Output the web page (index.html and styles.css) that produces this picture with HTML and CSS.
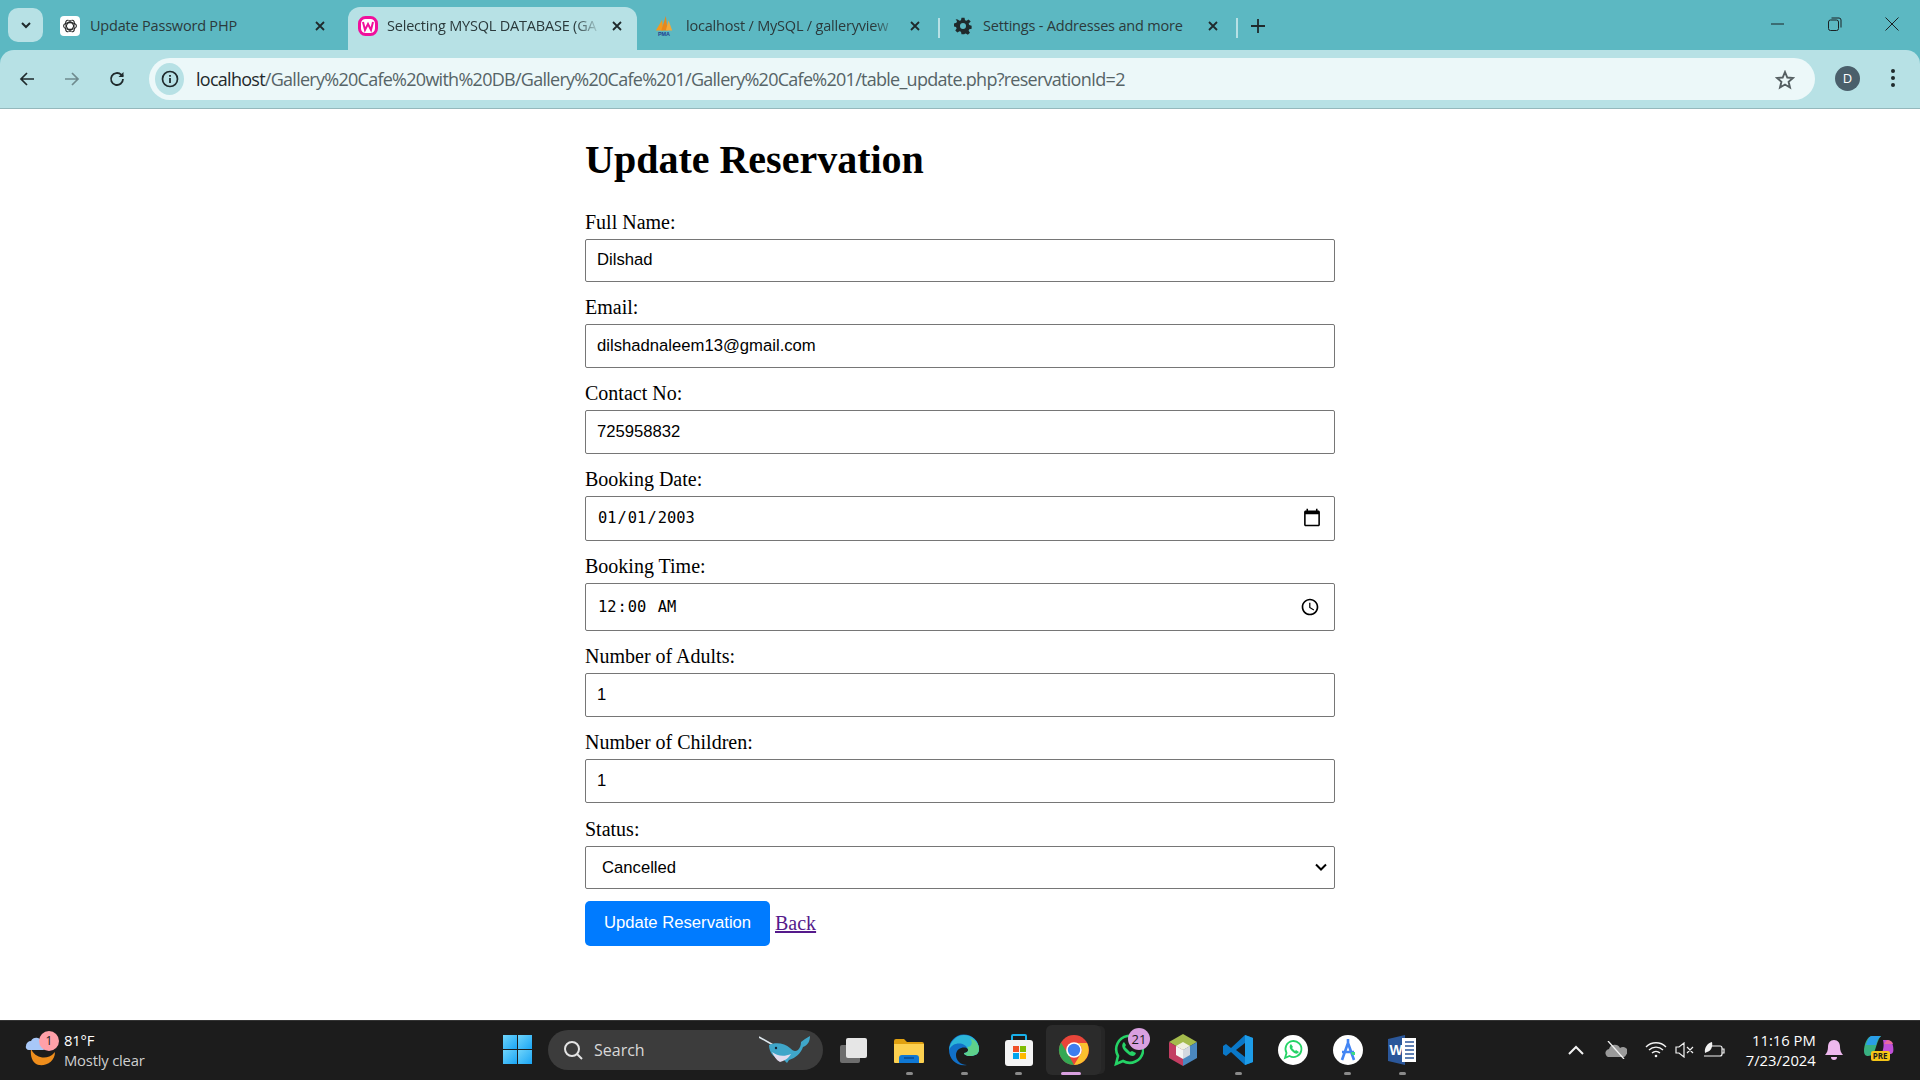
FILE: index.html
```html
<!DOCTYPE html>
<html lang="en">
<head>
<meta charset="utf-8">
<title>Update Reservation</title>
<link rel="stylesheet" href="styles.css">
</head>
<body>
<div class="app">
  <header class="browser">
    <div class="tabstrip">
      <div class="tabsearch"><svg width="14" height="14" viewBox="0 0 14 14"><path d="M3 5l4 4 4-4" fill="none" stroke="#1f2a2c" stroke-width="2"/></svg></div>
      <div class="tab tab-one">
        <span class="fav fav-white"><svg width="16" height="16" viewBox="0 0 16 16" fill="none" stroke="#222" stroke-width="1.1"><ellipse cx="8" cy="8" rx="6.4" ry="3.4"/><ellipse cx="8" cy="8" rx="6.4" ry="3.4" transform="rotate(60 8 8)"/><ellipse cx="8" cy="8" rx="6.4" ry="3.4" transform="rotate(120 8 8)"/></svg></span>
        <span class="tabtitle">Update Password PHP</span>
        <svg class="tabclose" width="12" height="12" viewBox="0 0 12 12"><path d="M2 2l8 8M10 2l-8 8" stroke="#1f2a2c" stroke-width="1.8"/></svg>
      </div>
      <div class="tab tab-two">
        <span class="fav"><svg width="20" height="20" viewBox="0 0 20 20"><rect x="1.5" y="1.5" width="17" height="17" rx="6" fill="#fff" stroke="#f0109c" stroke-width="3"/><path d="M5 6l2 8 3-6 3 6 2-8" fill="none" stroke="#f0109c" stroke-width="2"/></svg></span>
        <span class="tabtitle fade">Selecting MYSQL DATABASE (GA</span>
        <svg class="tabclose" width="12" height="12" viewBox="0 0 12 12"><path d="M2 2l8 8M10 2l-8 8" stroke="#1f2a2c" stroke-width="1.8"/></svg>
      </div>
      <div class="tab tab-three">
        <span class="fav"><svg width="22" height="24" viewBox="0 0 22 24"><path d="M2 17L9 5l1 12z" fill="#f29a1f"/><path d="M8 17l5-16 2 16z" fill="#e8871a"/><path d="M13 17l3-11 4 11z" fill="#f2a93a"/><text x="11" y="23" text-anchor="middle" class="pma">PMA</text></svg></span>
        <span class="tabtitle fade">localhost / MySQL / galleryview</span>
        <svg class="tabclose" width="12" height="12" viewBox="0 0 12 12"><path d="M2 2l8 8M10 2l-8 8" stroke="#1f2a2c" stroke-width="1.8"/></svg>
      </div>
      <i class="tabsep"></i>
      <div class="tab tab-four">
        <span class="fav"><svg width="18" height="18" viewBox="0 0 24 24"><path fill="#1f2a2c" fill-rule="evenodd" d="M10 1h4l.7 3.2 2 .8 2.800-1.800 2.800 2.800L19.500 8.800l.8 2 3.200.7v4l-3.200.7-.8 2 1.800 2.800-2.800 2.800-2.800-1.800-2 .8L14 23h-4l-.7-3.200-2-.8-2.800 1.800-2.800-2.800 1.800-2.800-.8-2L0 12.500v-4l3.200-.7.8-2L2.200 3 5 3.200l2.300 1.800 2-.8zM12 8a4 4 0 1 0 0 8 4 4 0 0 0 0-8z"/></svg></span>
        <span class="tabtitle">Settings - Addresses and more</span>
        <svg class="tabclose" width="12" height="12" viewBox="0 0 12 12"><path d="M2 2l8 8M10 2l-8 8" stroke="#1f2a2c" stroke-width="1.8"/></svg>
      </div>
      <i class="tabsep"></i>
      <svg class="newtab" width="14" height="14" viewBox="0 0 14 14"><path d="M7 0v14M0 7h14" stroke="#1f2a2c" stroke-width="1.800"/></svg>
      <div class="winctl">
        <svg width="14" height="14" viewBox="0 0 14 14"><path d="M0 7h13" stroke="#1a2224" stroke-width="1"/></svg>
        <svg width="14" height="14" viewBox="0 0 14 14" fill="none" stroke="#1a2224"><rect x=".5" y="3" width="10" height="10.500" rx="2"/><path d="M3.500 1h7.500a2 2 0 0 1 2 2v7.500"/></svg>
        <svg width="14" height="14" viewBox="0 0 14 14"><path d="M.5.500l13 13M13.500.500l-13 13" stroke="#1a2224"/></svg>
      </div>
    </div>
    <div class="toolbar">
      <svg class="navicon" width="18" height="18" viewBox="0 0 18 18" fill="none" stroke="#1f2a2c" stroke-width="1.700"><path d="M16 9H3M9 3L3 9l6 6"/></svg>
      <svg class="navicon" width="18" height="18" viewBox="0 0 18 18" fill="none" stroke="#6f8a8e" stroke-width="1.700"><path d="M2 9h13M9 3l6 6-6 6"/></svg>
      <svg class="navicon" width="18" height="18" viewBox="0 0 18 18" fill="none" stroke="#1f2a2c" stroke-width="1.800"><path d="M15 9a6 6 0 1 1-1.800-4.300L15 6.500"/><path d="M15.500 2v5h-5" fill="#1f2a2c" stroke="none"/></svg>
      <div class="omnibox">
        <span class="siteinfo"><svg width="18" height="18" viewBox="0 0 18 18"><circle cx="9" cy="9" r="7.500" fill="none" stroke="#1f2a2c" stroke-width="1.700"/><path d="M9 8v5M9 5v1.800" stroke="#1f2a2c" stroke-width="1.800"/></svg></span>
        <span class="url"><b>localhost</b>/Gallery%20Cafe%20with%20DB/Gallery%20Cafe%201/Gallery%20Cafe%201/table_update.php?reservationId=2</span>
        <svg class="star" width="20" height="20" viewBox="0 0 20 20"><path d="M10 2l2.300 5.500 5.700.5-4.400 3.800 1.400 5.700-5-3-5 3 1.400-5.700L2 8l5.700-.5z" fill="none" stroke="#555f62" stroke-width="1.900"/></svg>
      </div>
      <span class="avatar">D</span>
      <svg class="menu" width="6" height="20" viewBox="0 0 6 20"><circle cx="3" cy="3" r="2" fill="#1f2a2c"/><circle cx="3" cy="10" r="2" fill="#1f2a2c"/><circle cx="3" cy="17" r="2" fill="#1f2a2c"/></svg>
    </div>
  </header>

  <main class="page">
    <form class="form">
      <h1 class="title">Update Reservation</h1>
      <div class="group"><label class="lbl" for="n">Full Name:</label><input class="ctl text-ctl" id="n" type="text" value="Dilshad"></div>
      <div class="group"><label class="lbl" for="e">Email:</label><input class="ctl text-ctl" id="e" type="text" value="dilshadnaleem13@gmail.com"></div>
      <div class="group"><label class="lbl" for="c">Contact No:</label><input class="ctl text-ctl" id="c" type="text" value="725958832"></div>
      <div class="group"><label class="lbl" for="d">Booking Date:</label><input class="ctl date-ctl" id="d" type="date" value="2003-01-01"></div>
      <div class="group"><label class="lbl" for="t">Booking Time:</label><input class="ctl time-ctl" id="t" type="time" value="00:00"></div>
      <div class="group"><label class="lbl" for="a">Number of Adults:</label><input class="ctl text-ctl" id="a" type="number" value="1"></div>
      <div class="group"><label class="lbl" for="k">Number of Children:</label><input class="ctl text-ctl" id="k" type="number" value="1"></div>
      <div class="group group-status"><label class="lbl" for="s">Status:</label><select class="ctl select-ctl" id="s"><option>Pending</option><option>Confirmed</option><option selected>Cancelled</option></select></div>
      <div class="actions"><button class="btn" type="button">Update Reservation</button> <a class="back" href="#">Back</a></div>
    </form>
  </main>

  <footer class="taskbar">
    <div class="weather">
      <span class="wicon"><svg width="34" height="38" viewBox="0 0 34 38"><path d="M6 18a14 14 0 0 0 24 3c0 9-8 14-16 13C8 33 5 26 6 18z" fill="#ee8d1c"/><path d="M1 15a5 5 0 0 1 5-5 6 6 0 0 1 11 1 4 4 0 0 1 1 8H4a3 3 0 0 1-3-4z" fill="#a8c8f8"/></svg><span class="wbadge">1</span></span>
      <span class="wtext"><span class="wtemp">81°F</span><span class="wdesc">Mostly clear</span></span>
    </div>
    <div class="start"><i></i><i></i><i></i><i></i></div>
    <div class="search">
      <svg width="22" height="22" viewBox="0 0 22 22" fill="none" stroke="#e4e4e4" stroke-width="2"><circle cx="10" cy="10" r="7"/><path d="M15 15l5 5"/></svg>
      <span class="searchtext">Search</span>
      <svg class="whale" width="52" height="30" viewBox="0 0 52 30"><path d="M0 2l16 9" stroke="#dfe8ee" stroke-width="1.600"/><path d="M10 10c6-3 16-2 21 3 3 3 5 4 8 2 2-2 3-5 3-8l4-3 5-3c0 5-2 9-7 11-2 6-7 11-14 13l-2 3-3-3C16 25 10 18 10 10z" fill="#3fa6c9"/><path d="M13 17c5 4 12 5 19 2-3 5-7 7-11 8-4-2-6-6-8-10z" fill="#e2dcee"/><circle cx="17" cy="13" r="1.200" fill="#123"/></svg>
    </div>
    <div class="pins">
      <div class="pin"><svg width="30" height="30" viewBox="0 0 30 30"><rect x="1" y="10" width="20" height="18" rx="2" fill="#6d6d6d"/><rect x="7" y="3" width="21" height="20" rx="2" fill="#e6e6e6"/></svg></div>
      <div class="pin on"><svg width="30" height="30" viewBox="0 0 30 30"><path d="M0 6a2 2 0 0 1 2-2h8l3 3h15a2 2 0 0 1 2 2v4H0z" fill="#e0a010"/><path d="M0 9h30v18a1 1 0 0 1-1 1H1a1 1 0 0 1-1-1z" fill="#fcd050"/><path d="M5 28v-5a3 3 0 0 1 3-3h14a3 3 0 0 1 3 3v5z" fill="#0f78d4"/><path d="M10 23h10" stroke="#0a4a90" stroke-width="1.500"/></svg></div>
      <div class="pin on"><svg width="32" height="32" viewBox="0 0 32 32"><path d="M1 16a15 15 0 0 1 30-1c0 5-4 7-9 7-4 0-6-2-6-3 3 0 5-2 4-4-2-3-12-2-12 6 0 6 5 10 11 10C9 33 1 25 1 16z" fill="#1170c8"/><path d="M1 16C2 7 9 1 16 1c8 0 15 6 15 14 0 5-4 7-9 7-4 0-6-2-6-3 3 0 5-2 4-4-3-7-15-8-19 1z" fill="#2cb5d8"/><path d="M22 4c6 2 9 7 9 11 0 5-4 7-9 7-4 0-6-2-6-3 4 0 5-3 3-6 5 0 6-5 3-9z" fill="#5ed08a"/></svg></div>
      <div class="pin on"><svg width="30" height="34" viewBox="0 0 30 34"><path d="M8 8V3a1 1 0 0 1 1-1h12a1 1 0 0 1 1 1v5" fill="none" stroke="#18b0ea" stroke-width="2"/><rect x="1" y="7" width="28" height="26" rx="3" fill="#f4f4f4"/><rect x="9" y="13" width="6" height="6" fill="#f05028"/><rect x="16" y="13" width="6" height="6" fill="#80bc04"/><rect x="9" y="20" width="6" height="6" fill="#00a4ef"/><rect x="16" y="20" width="6" height="6" fill="#ffb900"/></svg></div>
      <div class="pin active"><svg width="32" height="32" viewBox="0 0 32 32"><circle cx="16" cy="16" r="15" fill="#e8453a"/><path d="M3 8.500L10 20 16 31a15 15 0 0 1-13-22.500z" fill="#34a853"/><path d="M16 9h13a15 15 0 0 1-13 22l7-11.500a7 7 0 0 0-7-10.500z" fill="#fbc02d"/><circle cx="16" cy="16" r="7.800" fill="#fff"/><circle cx="16" cy="16" r="6.200" fill="#3d7ef0"/></svg></div>
      <div class="pin"><svg width="32" height="34" viewBox="0 0 32 34"><path d="M4 31l2-8a13.500 13.500 0 1 1 5 5z" fill="none" stroke="#25d366" stroke-width="2.600"/><path d="M11 10c-2 3 0 7 4 10 3 3 6 4 8 2l1-2-4-2-2 1-5-5 1-2-2-3z" fill="#25d366"/></svg><span class="count">21</span></div>
      <div class="pin"><svg width="28" height="32" viewBox="0 0 28 32"><path d="M14 0l14 8-14 8L0 8z" fill="#a4bb4c"/><path d="M0 8l14 8v16L0 24z" fill="#c33d62"/><path d="M28 8L14 16v16l14-8z" fill="#4a88c0"/><path d="M14 8l7 4-7 4-7-4z" fill="#f0f0e0"/><path d="M7 12l7 4v9l-7-4z" fill="#f4f4f4"/><path d="M21 12l-7 4v9l7-4z" fill="#d4d8e0"/></svg></div>
      <div class="pin on"><svg width="30" height="32" viewBox="0 0 30 32"><path d="M22 1l8 3v24l-8 3-14-13-5 4-3-2v-8l3-2 5 4z" fill="#0a78c8"/><path d="M22 1l8 3v24l-8 3z" fill="#1d9ce8"/><path d="M22 9v14l-9-7z" fill="#1c1c1c"/></svg></div>
      <div class="pin"><svg width="30" height="30" viewBox="0 0 30 30"><circle cx="15" cy="15" r="15" fill="#fff"/><path d="M7 23l1.500-5a8 8 0 1 1 3 3z" fill="none" stroke="#25d366" stroke-width="1.800"/><path d="M12 10c-1 2 0 5 3 7 2 2 4 2 5 1l1-1-3-2-1 1-3-3 1-1-2-3z" fill="#25d366"/></svg></div>
      <div class="pin on"><svg width="30" height="30" viewBox="0 0 30 30"><circle cx="15" cy="15" r="15" fill="#fff"/><path d="M15 4v4M9 25l6-17 6 17M9 17h12" fill="none" stroke="#4285f4" stroke-width="2.600"/><path d="M18 17h4v3h-3z" fill="#3ddc84"/></svg></div>
      <div class="pin on"><svg width="28" height="30" viewBox="0 0 28 30"><path d="M0 4l17-4v30L0 26z" fill="#2b579a"/><rect x="14" y="3" width="14" height="24" fill="#fff"/><path d="M17 7h9M17 11h9M17 15h9M17 19h9M17 23h9" stroke="#2b579a" stroke-width="1.500"/><text x="8" y="20" text-anchor="middle" class="wordw">W</text></svg></div>
    </div>
    <div class="tray">
      <svg width="18" height="10" viewBox="0 0 18 10" fill="none" stroke="#f2f2f2" stroke-width="2"><path d="M2 9l7-7 7 7"/></svg>
      <svg class="t-cloud" width="22" height="18" viewBox="0 0 22 18"><path d="M1 14a4 4 0 0 1 3-6 6 6 0 0 1 11-1 4.500 4.500 0 0 1 6 7 3 3 0 0 1-2 2H3a3 3 0 0 1-2-2z" fill="#9a9a9a"/><path d="M3 0l16 18" stroke="#f2f2f2" stroke-width="1.300"/></svg>
      <svg class="t-wifi" width="22" height="16" viewBox="0 0 22 16" fill="none" stroke="#f2f2f2" stroke-width="1.400"><path d="M1 5a14 14 0 0 1 20 0M4 8a10 10 0 0 1 14 0M7 11a6 6 0 0 1 8 0"/><circle cx="11" cy="14" r="1.300" fill="#f2f2f2" stroke="none"/></svg>
      <svg class="t-vol" width="20" height="16" viewBox="0 0 20 16" fill="none" stroke="#f2f2f2" stroke-width="1.200"><path d="M1 5h3l5-4v14l-5-4H1zM12 5l6 6M18 5l-6 6"/></svg>
      <svg class="t-bat" width="22" height="18" viewBox="0 0 22 18" fill="none" stroke="#f2f2f2" stroke-width="1.200"><path d="M8 5h9a2 2 0 0 1 2 2v6a2 2 0 0 1-2 2H1"/><path d="M19 8h2v4h-2"/><path d="M2 12C1 6 5 2 9 1c1 5-1 9-5 10z" fill="#f2f2f2" stroke="none"/></svg>
      <div class="clock"><span>11:16 PM</span><span>7/23/2024</span></div>
      <svg class="t-bell" width="18" height="20" viewBox="0 0 18 20"><path d="M9 0c4 0 6 3 6 7 0 3 1 6 3 8H0c2-2 3-5 3-8 0-4 2-7 6-7z" fill="#eeb8ee"/><path d="M6 17h6a3 3 0 0 1-6 0z" fill="#eeb8ee"/></svg>
      <span class="copilot"><svg width="30" height="26" viewBox="0 0 30 26"><path d="M8 1h9c-3 3-4 8-6 14-1 3-3 6-7 6-2 0-4-1-4-5C0 10 3 1 8 1z" fill="#38b080"/><path d="M8 1h9c-3 2-4 5-5 9H2c1-4 3-9 6-9z" fill="#2a9ee8"/><path d="M19 5c5 0 9 0 10 6s0 8-3 8h-9c3-4 3-10 2-14z" fill="#c050d8"/><path d="M23 5c3 0 5 1 6 4h-9z" fill="#e86aa0"/></svg><span class="pre">PRE</span></span>
    </div>
  </footer>
</div>
</body>
</html>
```
FILE: styles.css
```css
* { box-sizing: border-box; }
html, body { margin: 0; height: 100%; overflow: hidden; background: #fff; }
.app { display: flex; flex-direction: column; height: 1080px; }

/* browser chrome */
.browser { flex: none; height: 109px; background: #5cb8c2; font-family: "Open Sans", "Noto Sans", sans-serif; color: #1f2a2c; }
.tabstrip { display: flex; align-items: flex-end; height: 50px; padding-left: 8px; }
.tabsearch { width: 35px; height: 34px; margin-bottom: 8px; border-radius: 10px; background: #b7e1e5; display: flex; align-items: center; justify-content: center; }
.tab { position: relative; display: flex; align-items: center; height: 43px; padding-bottom: 5px; font-size: 14.5px; flex: none; }
.tab-one { width: 305px; padding-left: 17px; }
.tab-two { width: 289px; padding-left: 10px; background: #b7e1e5; border-radius: 12px 12px 0 0; }
.tab-three { width: 301px; padding-left: 17px; }
.tab-four { width: 296px; padding-left: 13px; }
.fav { width: 20px; height: 20px; flex: none; display: flex; align-items: center; justify-content: center; border-radius: 4px; }
.fav-white { background: #fff; }
.tabtitle { margin-left: 10px; margin-bottom: 2px; white-space: nowrap; overflow: hidden; letter-spacing: -.2px; color: #2b3a3c; }
.tab-one .tabtitle { width: 214px; }
.tab-two .tabtitle { width: 214px; margin-left: 9px; }
.tab-three .tabtitle { width: 213px; margin-left: 12px; }
.tab-four .tabtitle { width: 214px; }
.fade { -webkit-mask-image: linear-gradient(90deg, #000 88%, transparent); mask-image: linear-gradient(90deg, #000 88%, transparent); }
.tabclose { flex: none; margin-left: 10px; }
.tabsep { flex: none; width: 2px; height: 20px; margin-bottom: 12px; background: #b7e1e5; }
.newtab { flex: none; margin: 0 0 17px 13px; }
.winctl { display: flex; margin-left: auto; gap: 43px; padding-right: 21px; margin-bottom: 19px; }
.toolbar { display: flex; align-items: center; height: 59px; padding: 0 0 0 18px; gap: 27px; background: #b7e1e5; border-radius: 14px 14px 0 0; border-bottom: 1px solid #94b8bc; }
.navicon { flex: none; }
.omnibox { display: flex; align-items: center; width: 1666px; height: 42px; margin-left: -4px; padding: 0 20px 0 6px; border-radius: 21px; background: #ecf8f9; }
.siteinfo { flex: none; width: 29px; height: 32px; border-radius: 50%; background: #b7e1e5; display: flex; align-items: center; justify-content: center; }
.url { margin-left: 12px; font-size: 18px; letter-spacing: -.73px; color: #566467; white-space: nowrap; }
.url b { font-weight: 400; color: #1f2a2c; }
.star { margin: 1px 0 0 auto; }
.avatar { flex: none; width: 25px; height: 25px; margin: -2px 0 0 -7px; border-radius: 50%; background: #4a5f6b; color: #fff; font-size: 13px; line-height: 25px; text-align: center; }
.menu { flex: none; margin: -2px 0 0 3px; }

/* page */
.page { flex: 1; }
.form { width: 750px; margin: 0 auto; padding-top: 28px; font-family: "Liberation Serif", serif; color: #000; }
.title { margin: 0 0 27.5px; font-size: 40px; line-height: 46px; font-weight: 700; }
.group { margin-bottom: 14px; }
.group-status { margin: 15px 0 12px; }
.lbl { display: block; height: 23px; margin-bottom: 5px; font-size: 20px; line-height: 23px; }
.ctl { display: block; width: 750px; border: 1px solid #767676; border-radius: 2px; background: #fff; color: #000; outline: none; }
.text-ctl { height: 43.7px; padding: 0 11px; font-family: "Liberation Sans", sans-serif; font-size: 16.67px; }
.date-ctl { height: 45.6px; padding: 0 11px; font-family: "DejaVu Sans Mono", monospace; font-size: 15.4px; }
.time-ctl { height: 48px; padding: 0 11px; font-family: "DejaVu Sans Mono", monospace; font-size: 15.4px; }
.date-ctl::-webkit-calendar-picker-indicator { width: 20px; height: 20px; margin: 0 1px 0 0; padding: 0; }
.time-ctl::-webkit-calendar-picker-indicator { width: 20px; height: 20px; margin: 0 3px 0 0; padding: 0; }
.select-ctl { height: 43px; padding: 0 16px; appearance: none; font-family: "Liberation Sans", sans-serif; font-size: 16.67px; background-image: url("data:image/svg+xml,%3Csvg xmlns='http://www.w3.org/2000/svg' width='12' height='8'%3E%3Cpath d='M1 1.500l5 5 5-5' fill='none' stroke='%23000' stroke-width='2'/%3E%3C/svg%3E"); background-repeat: no-repeat; background-position: right 7px center; }
.actions { font-size: 20px; line-height: 45px; }
.btn { height: 45px; width: 185px; padding: 0; border: 0; border-radius: 5px; background: #007bff; color: #fff; font-family: "Liberation Sans", sans-serif; font-size: 16.67px; vertical-align: top; }
.back { color: #551a8b; }

/* taskbar */
.taskbar { flex: none; display: flex; align-items: center; height: 60px; padding: 0 0 2px 25px; background: #1c1c1c; border-top: 1px solid #333; font-family: "Open Sans", "Noto Sans", sans-serif; color: #fff; }
.weather { display: flex; align-items: center; width: 478px; flex: none; }
.wicon { position: relative; width: 39px; height: 38px; flex: none; }
.wbadge { position: absolute; left: 14px; top: 0; width: 20px; height: 20px; border-radius: 50%; background: #ffa0a8; color: #1c1c1c; font-size: 12px; line-height: 20px; text-align: center; }
.wtext { display: flex; flex-direction: column; font-size: 14.8px; line-height: 20px; letter-spacing: -.2px; }
.wdesc { color: #cfcfcf; }
.start { flex: none; display: grid; grid-template-columns: 14px 14px; grid-template-rows: 14px 14px; gap: 1px; width: 29px; }
.start i { background: linear-gradient(135deg, #6fd4fa, #1aa5f5); }
.search { flex: none; display: flex; align-items: center; width: 275px; height: 40px; margin-left: 16px; padding: 0 12px 0 14px; border-radius: 20px; background: #3c3c3c; }
.searchtext { margin-left: 10px; font-size: 16px; color: #d8d8d8; }
.whale { margin-left: auto; }
.pins { flex: none; display: flex; margin-left: 4px; }
.pin { position: relative; flex: none; width: 54.8px; height: 50px; display: flex; align-items: center; justify-content: center; }
.on::after, .active::after { content: ""; position: absolute; left: 24px; bottom: 0; width: 7px; height: 3px; border-radius: 2px; background: #8a8a8a; }
.active { background: #2b2b2b; border-radius: 6px; box-shadow: 5px 0 0 -1px #262626; }
.active::after { left: 15px; width: 20px; background: #d9a0e0; }
.count { position: absolute; left: 27px; top: 3px; width: 22px; height: 22px; border-radius: 50%; background: #d9a0e0; color: #1c1c1c; font-size: 13px; line-height: 22px; text-align: center; }
.tray { flex: none; display: flex; align-items: center; margin-left: 137px; }
.t-cloud { margin-left: 20px; }
.t-wifi { margin-left: 18px; }
.t-vol { margin-left: 8px; }
.t-bat { margin-left: 8px; }
.clock { display: flex; flex-direction: column; align-items: flex-end; width: 91px; font-size: 14.8px; line-height: 20px; }
.t-bell { margin-left: 9px; }
.copilot { position: relative; display: block; width: 30px; height: 30px; margin-left: 21px; }
.pre { position: absolute; left: 7px; top: 16px; padding: 0 2px; border-radius: 2px; background: #f5c518; color: #1c1c1c; font-size: 8px; line-height: 10px; font-weight: 700; }
.pma { font: 700 6px "Liberation Sans", sans-serif; fill: #23408e; }
.wordw { font: 700 14px "Liberation Sans", sans-serif; fill: #fff; }
```
